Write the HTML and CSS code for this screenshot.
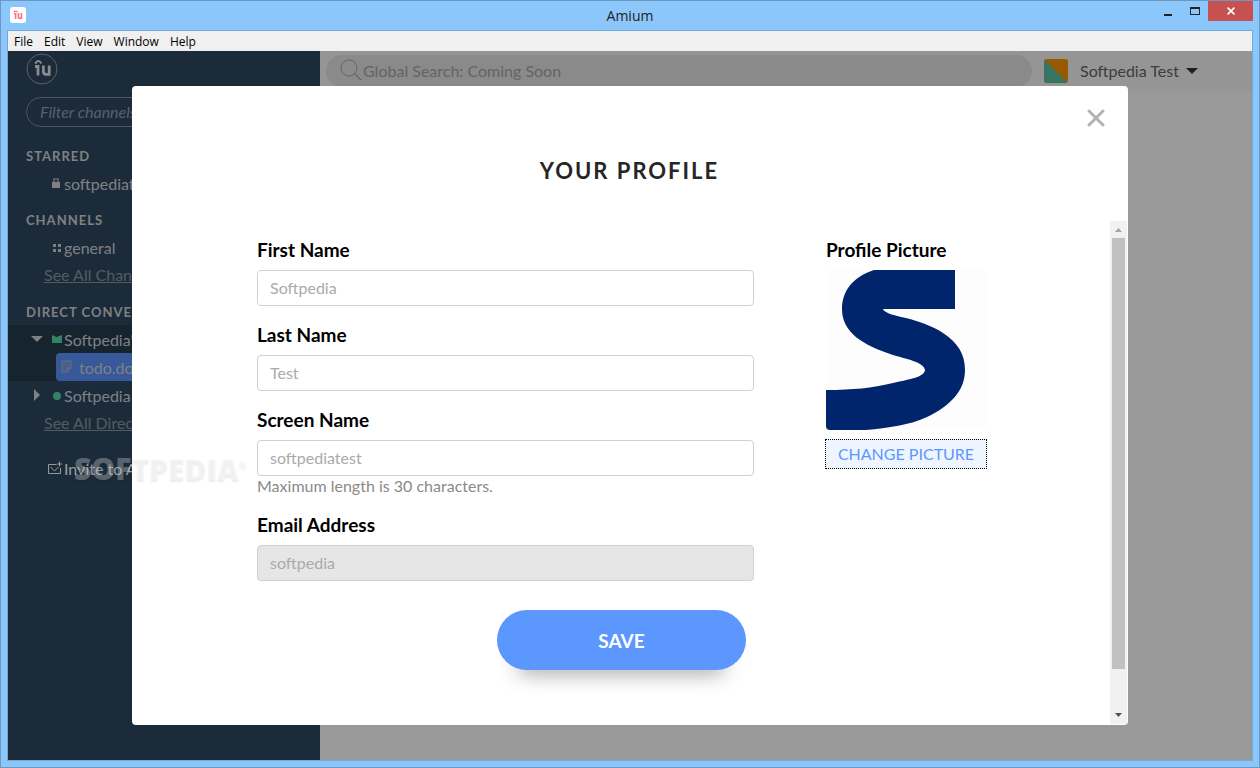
FILE: index.html
```html
<!DOCTYPE html>
<html lang="en">
<head>
  <meta charset="UTF-8">
  <meta name="viewport" content="width=device-width, initial-scale=1.0">
  <title>Amium</title>
  <link rel="stylesheet" href="styles.css">
</head>
<body>
  <header class="titlebar">
    <svg class="app-icon" viewBox="0 0 16 16">
      <rect width="16" height="16" rx="3" fill="#fff"/>
      <path d="M4 5.2 Q5.8 3 7.4 5.2" fill="none" stroke="#fc6f8f" stroke-width="1.3"/>
      <path d="M4 6.8H5.6V12 M8.4 6V9.4 Q8.4 11.2 10 11.2 H11.4 M11.4 6V12" fill="none" stroke="#fc6f8f" stroke-width="1.6"/>
    </svg>
    <h1 class="window-title">Amium</h1>
    <div class="window-controls">
      <button class="win-button" aria-label="Minimize"><svg width="8" height="12"><rect y="9" width="8" height="2" fill="#222"/></svg></button>
      <button class="win-button" aria-label="Maximize"><svg width="10" height="8"><path d="M0 0H10V8H0Z M1 2V7H9V2Z" fill="#222" fill-rule="evenodd"/></svg></button>
      <button class="win-button win-close" aria-label="Close window"><svg width="8" height="8"><path d="M.6 .6L7.4 7.4M7.4 .6L.6 7.4" stroke="#fff" stroke-width="1.7"/></svg></button>
    </div>
  </header>

  <div class="client">
    <nav class="menubar">
      <button>File</button>
      <button>Edit</button>
      <button>View</button>
      <button>Window</button>
      <button>Help</button>
    </nav>

    <div class="app">
      <aside class="sidebar">
        <svg class="logo" viewBox="0 0 32 32">
          <circle cx="16" cy="16" r="15" fill="none" stroke="#9aa5b0" stroke-width="1"/>
          <path d="M9.2 10.6 Q12.4 5.6 15.4 10.6" fill="none" stroke="#e4e8ec" stroke-width="2"/>
          <path d="M9 13.5H12V22.6 M17.4 12.4V18.6Q17.4 21.4 20.2 21.4H23.2 M23.2 12.4V22.8" fill="none" stroke="#e4e8ec" stroke-width="2.8"/>
        </svg>
        <input class="filter" type="text" placeholder="Filter channels" aria-label="Filter channels">

        <section class="group">
          <h2>Starred</h2>
          <a class="row" href="#">
            <svg class="row-icon" viewBox="0 0 12 12"><path d="M2 5H10V11H2Z" fill="#d3d6da"/><path d="M4 5V2H8V5" fill="none" stroke="#d3d6da" stroke-width="1.2"/></svg>
            softpediatest
          </a>
        </section>

        <section class="group">
          <h2>Channels</h2>
          <a class="row" href="#">
            <svg class="row-icon" viewBox="0 0 12 12"><path d="M3 3h3v3H3zM8 3h3v3H8zM3 8h3v3H3zM8 8h3v3H8z" fill="#d3d6da"/></svg>
            general
          </a>
          <a class="see-all" href="#">See All Channels</a>
        </section>

        <section class="group">
          <h2>Direct Conversations</h2>
          <div class="active-group">
            <a class="row" href="#">
              <svg class="toggle" viewBox="0 0 12 12"><path d="M0 3H12L6 9Z" fill="#d3d6da"/></svg>
              <svg class="row-icon" viewBox="0 0 12 12"><path d="M2 2L6.5 4L12 2V10H2Z" fill="#56ddab"/></svg>
              Softpedia's Files
            </a>
            <a class="row file" href="#">
              <svg class="file-icon" viewBox="0 0 12 14"><path d="M1 1H10V8L6.5 12H1Z" fill="#7c9de0" stroke="#a8b9df"/><path d="M6.5 12V8H10" fill="none" stroke="#a8b9df"/></svg>
              todo.docx
            </a>
          </div>
          <a class="row" href="#">
            <svg class="toggle" viewBox="0 0 12 12"><path d="M3 0L9 6L3 12Z" fill="#d3d6da"/></svg>
            <svg class="row-icon" viewBox="0 0 12 12"><circle cx="7" cy="7" r="4" fill="#56ddab"/></svg>
            Softpedia Test
          </a>
          <a class="see-all" href="#">See All Direct Conversations</a>
        </section>

        <a class="row invite" href="#">
          <svg class="invite-icon" viewBox="0 0 14 14"><path d="M8.5 3.5H.5V12.5H12.5V7M2.5 6L6.5 10L10.5 6M11.5 .5V5.5M9 3H14" fill="none" stroke="#fff"/></svg>
          Invite to Amium
        </a>
      </aside>

      <main class="main">
        <div class="topbar">
          <label class="search">
            <svg class="search-icon" viewBox="0 0 22 22"><circle cx="9" cy="8" r="8" fill="none" stroke="#aaa"/><path d="M15 14L21 20" stroke="#aaa" stroke-width="1.4"/></svg>
            <input type="search" placeholder="Global Search: Coming Soon" aria-label="Global search">
          </label>
          <button class="user">
            <svg class="avatar" viewBox="0 0 24 24"><rect width="24" height="24" rx="3" fill="#ff9500"/><path d="M1 1L23 23Q22 24 21 24H3Q0 24 0 21V3Q0 2 1 1Z" fill="#5cc4a0"/></svg>
            <span class="user-name">Softpedia Test</span>
            <svg class="caret" viewBox="0 0 12 6"><path d="M0 0H12L6 6Z" fill="#333"/></svg>
          </button>
        </div>
      </main>

      <div class="overlay">
        <div class="modal" role="dialog" aria-labelledby="profile-title">
          <button class="modal-close" aria-label="Close">
            <svg width="18" height="18"><path d="M2 2L16 16M16 2L2 16" stroke="#b3b3b3" stroke-width="3" stroke-linecap="round"/></svg>
          </button>
          <h2 class="modal-title" id="profile-title">Your Profile</h2>

          <div class="modal-body">
            <form class="profile">
              <div class="columns">
                <div class="fields">
                  <div class="field">
                    <label for="first-name">First Name</label>
                    <input id="first-name" type="text" placeholder="Softpedia">
                  </div>
                  <div class="field">
                    <label for="last-name">Last Name</label>
                    <input id="last-name" type="text" placeholder="Test">
                  </div>
                  <div class="field">
                    <label for="screen-name">Screen Name</label>
                    <input id="screen-name" type="text" maxlength="30" placeholder="softpediatest">
                    <p class="hint">Maximum length is 30 characters.</p>
                  </div>
                  <div class="field">
                    <label for="email">Email Address</label>
                    <input id="email" type="text" placeholder="softpedia" disabled>
                  </div>
                </div>
                <div class="picture">
                  <h3>Profile Picture</h3>
                  <svg class="photo" viewBox="0 0 160 160" role="img" aria-label="Profile picture">
                    <rect width="160" height="160" fill="#fdfdfd"/>
                    <path d="M129 0H48C26 7 16 22 16 39C16 62 36 75 67 85C85 90 98 93 99 100C98 107 85 109 67 113C45 118 28 120 0 120V160H40C62 158 84 155 101 147C124 136 139 121 139 100C139 84 132 73 117 63C108 57 97 53 84 49C70 46 58 43 57 39H129Z" fill="#00256d"/>
                  </svg>
                  <button type="button" class="change">Change Picture</button>
                </div>
              </div>
              <button type="button" class="save">Save</button>
            </form>
            <div class="scrollbar">
              <svg width="17" height="17"><path d="M5 11H12L8.5 7Z" fill="#a3a3a3"/></svg>
              <div class="track"><div class="thumb"></div></div>
              <svg width="17" height="17"><path d="M5 6H12L8.5 10Z" fill="#505050"/></svg>
            </div>
          </div>
        </div>
      </div>

      <div class="watermark">SOFTPEDIA<sup>®</sup></div>
    </div>
  </div>
</body>
</html>
```
FILE: styles.css
```css
* {
  box-sizing: border-box;
}
body {
  margin: 0;
  min-height: 100vh;
  display: flex;
  flex-direction: column;
  background-color: #8cc7fb;
  border: 1px solid #6b99c2;
  font-family: Lato, "Liberation Sans", sans-serif;
  font-size: 16px;
}
h1, h2, h3, p {
  margin: 0;
}
button, input {
  font-family: inherit;
  font-size: inherit;
}
button {
  border: none;
  background: none;
  padding: 0;
  cursor: pointer;
}
a {
  color: inherit;
  text-decoration: none;
}
svg {
  display: block;
  flex: none;
}

/* window frame */
.titlebar {
  display: grid;
  grid-template-columns: 1fr auto 1fr;
  height: 29px;
  font-family: "Open Sans", sans-serif;
}
.app-icon {
  width: 16px;
  height: 16px;
  margin: 6px 9px;
}
.window-title {
  font-size: 14px;
  font-weight: 400;
  line-height: 29px;
  color: #222;
}
.window-controls {
  display: flex;
  justify-content: flex-end;
  height: 20px;
  margin-right: 6px;
}
.win-button {
  width: 27px;
  display: flex;
  align-items: center;
  justify-content: center;
}
.win-close {
  width: 45px;
  background-color: #c75050;
}
.client {
  flex: 1;
  display: flex;
  flex-direction: column;
  margin: 0 6px 6px;
  border: 1px solid #75a9d8;
}
.menubar {
  display: flex;
  gap: 11px;
  height: 20px;
  padding: 0 6px;
  background-color: #f0f0f0;
  font-family: "Open Sans", sans-serif;
  font-size: 12px;
}
.app {
  position: relative;
  flex: 1;
  display: grid;
  grid-template-columns: 312px 1fr;
  background-color: #fff;
}

/* sidebar */
.sidebar {
  padding-top: 2px;
  background-color: #2d4861;
  color: #d3d6da;
}
.logo {
  width: 32px;
  height: 32px;
  margin-left: 18px;
}
.filter {
  width: 276px;
  height: 30px;
  margin: 12px 18px 14px;
  padding: 0 13px 2px;
  border: 1px solid #8592a0;
  border-radius: 15px;
  background: none;
  display: block;
}
.filter::placeholder {
  color: #98a1ab;
  font-style: italic;
}
.group {
  margin-bottom: 8px;
}
.group h2 {
  padding: 2px 0 0 18px;
  font-size: 13px;
  line-height: 26px;
  letter-spacing: 1px;
  text-transform: uppercase;
}
.row {
  display: flex;
  align-items: center;
  justify-content: flex-start;
  height: 28px;
  padding-left: 42px;
  white-space: nowrap;
}
.row-icon {
  width: 12px;
  height: 12px;
  margin-right: 2px;
}
.toggle {
  width: 12px;
  height: 12px;
  margin: 0 7px 0 -19px;
}
.see-all {
  display: block;
  padding-left: 36px;
  line-height: 28px;
  color: #8c98a4;
  text-decoration: underline;
}
.active-group {
  background-color: #253c50;
}
.file {
  margin-left: 48px;
  padding-left: 5px;
  border-radius: 4px;
  background-color: #5c95ff;
}
.file-icon {
  width: 12px;
  height: 14px;
  margin-right: 6px;
}
.invite {
  margin-top: 17px;
  padding-left: 40px;
  color: #fff;
}
.invite-icon {
  width: 14px;
  height: 14px;
  margin-right: 2px;
}

/* main area */
.topbar {
  display: flex;
  align-items: center;
  gap: 12px;
  height: 40px;
  padding-left: 6px;
  background-color: #f8f8f8;
}
.search {
  flex: 1;
  display: flex;
  align-items: center;
  height: 32px;
  padding-left: 14px;
  border-radius: 16px;
  background-color: #e6e6e6;
}
.search-icon {
  width: 22px;
  height: 22px;
  overflow: visible;
}
.search input {
  flex: 1;
  border: none;
  padding: 0 1px 2px;
  background: none;
}
.search input::placeholder {
  color: #a6a6a6;
}
.user {
  display: flex;
  align-items: center;
  width: 208px;
  color: #666;
}
.user-name {
  padding-bottom: 2px;
}
.avatar {
  width: 24px;
  height: 24px;
  margin-right: 12px;
}
.caret {
  width: 12px;
  height: 6px;
  margin-left: 7px;
}

/* profile dialog */
.overlay {
  position: absolute;
  inset: 0;
  display: flex;
  padding: 35px 124px;
  background-color: rgba(0, 0, 0, 0.4);
}
.modal {
  position: relative;
  flex: 1;
  display: flex;
  flex-direction: column;
  padding: 0 1px 1px 0;
  border-radius: 4px;
  background-color: #fff;
}
.modal-close {
  position: absolute;
  top: 23px;
  right: 23px;
}
.modal-title {
  padding: 72px 0 37px;
  font-size: 22px;
  line-height: 26px;
  letter-spacing: 2px;
  text-align: center;
  text-transform: uppercase;
  color: #262626;
}
.modal-body {
  flex: 1;
  display: flex;
}
.profile {
  flex: 1;
  padding: 17px 124px 0 125px;
}
.columns {
  display: flex;
  gap: 72px;
}
.fields {
  flex: 1;
}
.field {
  margin-bottom: 17px;
}
.field label,
.picture h3 {
  display: block;
  margin-bottom: 8px;
  font-size: 19px;
  font-weight: 700;
  line-height: 24px;
  color: #000;
}
.field input {
  display: block;
  width: 100%;
  height: 36px;
  padding: 0 12px 2px;
  border: 1px solid #d0d0d0;
  border-radius: 4px;
  background-color: #fff;
}
.field input:disabled {
  background-color: #e6e6e6;
}
.field input::placeholder {
  color: #aaa;
}
.hint {
  line-height: 20px;
  color: #8a8a8a;
}
.picture {
  width: 160px;
}
.photo {
  width: 160px;
  height: 160px;
  border-radius: 4px;
}
.change {
  width: 162px;
  height: 30px;
  margin: 9px -1px 0;
  padding-bottom: 2px;
  border: 1px dotted #000;
  background-color: #eff5ff;
  color: #5c97ff;
  text-transform: uppercase;
}
.save {
  display: block;
  width: 249px;
  height: 60px;
  margin: 12px auto 0;
  border-radius: 30px;
  background-color: #5c97ff;
  box-shadow: 0 24px 20px -20px rgba(0, 0, 0, 0.35);
  color: #fff;
  font-size: 19px;
  font-weight: 700;
  text-transform: uppercase;
}
.scrollbar {
  display: flex;
  flex-direction: column;
  width: 17px;
  background-color: #f1f1f1;
}
.track {
  flex: 1;
  padding: 0 2px;
}
.thumb {
  height: 92%;
  background-color: #c1c1c1;
}
.watermark {
  position: absolute;
  top: 399px;
  left: 66px;
  font-family: "Open Sans", sans-serif;
  font-size: 30px;
  font-weight: 800;
  line-height: 38px;
  color: rgba(255, 255, 255, 0.3);
  text-shadow: 0 2px 2px rgba(0, 0, 0, 0.08);
  pointer-events: none;
}
.watermark sup {
  font-size: 10px;
  line-height: 10px;
  vertical-align: 12px;
}
```
